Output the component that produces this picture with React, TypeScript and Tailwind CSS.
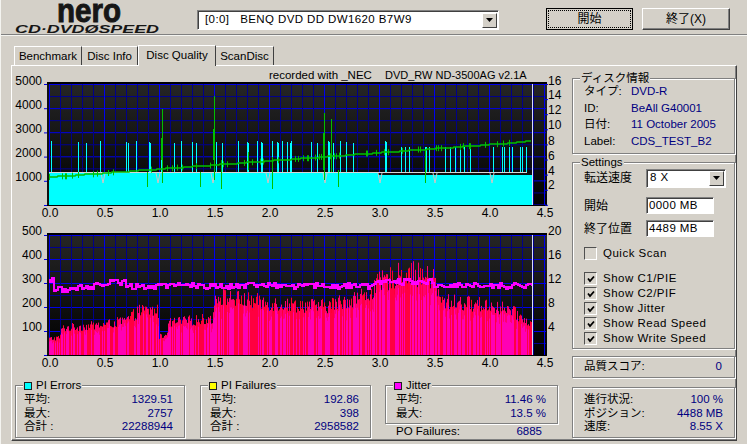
import React from "react";

// seeded random so the chart noise is the same on every load
let seed = 1234;
const rnd = () => {
  seed = (seed * 1664525 + 1013904223) % 4294967296;
  return seed / 4294967296;
};

const X0 = 49;
const XEND = 532;
const xs: number[] = [];
for (let x = X0; x < XEND; x++) xs.push(x);

const lerpTable = (table: number[][], v: number) => {
  for (let i = 1; i < table.length; i++) {
    if (v <= table[i][0]) {
      const [a, b] = table[i - 1];
      const [c, d] = table[i];
      return b + ((d - b) * (v - a)) / (c - a || 1);
    }
  }
  return table[table.length - 1][1];
};

const cyanSpikes = [
  51, 78, 86, 100, 126, 128, 136, 149, 150, 161, 162, 174, 181, 192, 196, 214, 216, 222, 238, 247, 248, 257, 261, 262,
  272, 277, 278, 282, 287, 290, 291, 311, 317, 328, 329, 333, 340, 346, 353, 385, 386, 401, 405, 409, 425, 426, 429,
  445, 450, 455, 460, 464, 470, 493, 502, 504, 509, 512, 520, 522, 526,
];
const dips = [103, 158, 213, 268, 325, 380, 435, 492];
const greenSpikes = [
  [162, 109, 183],
  [161, 138, 160],
  [214, 96, 180],
  [213, 129, 160],
  [147, 172, 187],
  [200, 172, 187],
  [221, 160, 189],
  [248, 152, 170],
  [272, 157, 189],
  [324, 113, 180],
  [323, 133, 170],
  [331, 119, 172],
  [338, 170, 187],
  [425, 150, 183],
];

const speedY = (x: number) => 177 - Math.floor((x - X0) / 9) * 0.67;

const envelope = [
  [0, 75],
  [0.09, 80],
  [0.12, 125],
  [0.5, 140],
  [0.7, 160],
  [0.82, 205],
  [0.99, 205],
  [1.0, 85],
  [1.05, 90],
  [1.1, 150],
  [1.49, 170],
  [1.51, 275],
  [1.7, 260],
  [2.0, 240],
  [2.5, 225],
  [2.9, 280],
  [3.0, 335],
  [3.25, 385],
  [3.5, 350],
  [3.55, 250],
  [4.0, 230],
  [4.2, 205],
  [4.37, 145],
];

const y2 = (v: number) => 355 - v * 0.24;
const bars = xs.map((x) => {
  const base = lerpTable(envelope, (x - X0) / 110);
  const r1 = rnd();
  const r2 = rnd();
  const top = base * (0.76 + r1 * 0.28);
  const mag = top * (0.72 + r2 * 0.28);
  return { x, top: y2(top), mag: y2(mag), strong: r2 > 0.55 };
});

// jitter trace: 2px columns joined to the previous value, pure magenta
let lastJitter = 279;
const jitter = xs
  .filter((_, i) => i % 2 === 0)
  .map((x) => {
    const drift =
      x < 52 ? 279 : x < 104 ? 290 - (x - 52) * 0.12 : x < 125 ? 281 : x < 375 ? 285 : x < 430 ? 281 : 285;
    const y = Math.round(drift + (rnd() - 0.5) * 6);
    const seg = { x, y: Math.min(y, lastJitter), h: Math.abs(y - lastJitter) + 2 };
    lastJitter = y;
    return seg;
  });

const smallTicks = xs.filter(() => rnd() > 0.88);

function Grid({ top, bottom, step, major }: { top: number; bottom: number; step: number; major: number }) {
  const rows: number[] = [];
  for (let i = 0; top + i * step <= bottom; i++) rows.push(i);
  const cols: number[] = [];
  for (let i = 0; i <= 45; i++) cols.push(i);
  return (
    <g>
      {rows.map((i) => (
        <line
          key={i}
          x1={47}
          x2={546}
          y1={top + i * step}
          y2={top + i * step}
          stroke={i % major === 0 ? "#0000e8" : "#000090"}
          strokeWidth={1}
        />
      ))}
      {cols.map((i) => (
        <line
          key={i}
          x1={49.5 + i * 11}
          x2={49.5 + i * 11}
          y1={top}
          y2={bottom}
          stroke={i % 5 === 0 ? "#0000f0" : "#000088"}
          strokeWidth={1}
        />
      ))}
    </g>
  );
}

const bottomLabels = ["0.0", "0.5", "1.0", "1.5", "2.0", "2.5", "3.0", "3.5", "4.0", "4.5"];

function AxisText({ x, y, anchor, children }: { x: number; y: number; anchor?: "start" | "middle" | "end"; children: React.ReactNode }) {
  return (
    <text x={x} y={y} textAnchor={anchor} fontSize={12} fill="#000" fontFamily="'Liberation Sans', sans-serif">
      {children}
    </text>
  );
}

function TopChart() {
  return (
    <svg viewBox="12 68 555 154" className="block w-[555px] h-[154px] shrink-0">
      <text x={269} y={79} fontSize={11.5} fill="#000" fontFamily="'Liberation Sans', sans-serif">
        recorded with _NEC
      </text>
      <text x={385} y={79} fontSize={11} fill="#000" fontFamily="'Liberation Sans', sans-serif">
        DVD_RW ND-3500AG v2.1A
      </text>
      <rect x={47} y={82} width={500} height={124} fill="url(#plotA)" />
      <rect x={47} y={82} width={500} height={2} fill="#000" />
      <Grid top={84.5} bottom={205} step={12.05} major={2} />
      <rect x={47} y={84} width={2} height={121} fill="#111" />
      {cyanSpikes.map((x, i) => (
        <rect key={i} x={x} y={x > 400 ? 147 : 141 + (i % 3)} width={1} height={32} fill="#00ffff" />
      ))}
      <rect x={49} y={173} width={483} height={32} fill="#00ffff" />
      <rect x={378} y={173} width={154} height={2} fill="#101010" />
      <rect x={49} y={172} width={478} height={1} fill="#d8d8d8" />
      {dips.map((x, i) => (
        <path key={i} d={`M${x - 2} 173L${x} 183L${x + 2} 173`} stroke="#c8c8c8" strokeWidth={1} fill="none" />
      ))}
      <path
        d={xs
          .map((x, i) => `${i === 0 ? "M" : "L"}${x} ${speedY(x).toFixed(0)}`)
          .join("")}
        stroke="#00c000"
        strokeWidth={1.6}
        fill="none"
      />
      {smallTicks.map((x) => (
        <rect key={x} x={x} y={speedY(x) - 3} width={1} height={6} fill="#00c000" />
      ))}
      {greenSpikes.map(([x, a, b], i) => (
        <rect key={i} x={x} y={a} width={1} height={b - a} fill="#00c000" />
      ))}
      <rect x={532} y={84} width={1} height={121} fill="#d8dcf8" />
      <rect x={47} y={205} width={500} height={1} fill="#000" />
      {[0, 1, 2, 3, 4, 5].map((i) => (
        <rect key={i} x={44} y={84 + i * 24.2} width={3} height={1} fill="#0000e8" />
      ))}
      {[0, 1, 2, 3, 4, 5, 6, 7, 8].map((i) => (
        <rect key={i} x={545} y={84 + i * 15.1} width={3} height={1} fill="#0000e8" />
      ))}
      {[
        ["5000", 85],
        ["4000", 109],
        ["3000", 133],
        ["2000", 157],
        ["1000", 181],
      ].map(([t, y]) => (
        <AxisText key={t} x={42} y={Number(y)} anchor="end">
          {t}
        </AxisText>
      ))}
      {[
        ["16", 85],
        ["14", 99],
        ["12", 114],
        ["10", 129],
        ["8", 145],
        ["6", 160],
        ["4", 175],
        ["2", 189],
      ].map(([t, y]) => (
        <AxisText key={t} x={548} y={Number(y)}>
          {t}
        </AxisText>
      ))}
      {bottomLabels.map((t, i) => (
        <AxisText key={t} x={50 + i * 55} y={217} anchor="middle">
          {t}
        </AxisText>
      ))}
    </svg>
  );
}

function BottomChart() {
  return (
    <svg viewBox="12 222 555 150" className="block w-[555px] h-[150px] shrink-0">
      <rect x={47} y={233} width={500} height={123} fill="url(#plotB)" />
      <rect x={47} y={233} width={500} height={2} fill="#000" />
      <Grid top={235.5} bottom={355} step={12} major={2} />
      <rect x={47} y={235} width={2} height={120} fill="#111" />
      {bars.map((b) => (
        <g key={b.x}>
          <rect x={b.x} y={b.top} width={1} height={355 - b.top} fill={b.strong ? "#ff0030" : "#ff0070"} />
          <rect x={b.x} y={b.mag} width={1} height={355 - b.mag} fill={b.strong ? "#ff0040" : "#ff00b4"} />
        </g>
      ))}
      {jitter.map((j) => (
        <rect key={j.x} x={j.x} y={j.y} width={2} height={j.h} fill="#ff00ff" />
      ))}
      <rect x={532} y={235} width={1} height={120} fill="#d8dcf8" />
      <rect x={47} y={355} width={500} height={1} fill="#000" />
      {[0, 1, 2, 3, 4, 5].map((i) => (
        <rect key={i} x={44} y={235 + i * 24} width={3} height={1} fill="#0000e8" />
      ))}
      {[
        ["500", 235],
        ["400", 259],
        ["300", 283],
        ["200", 307],
        ["100", 331],
      ].map(([t, y]) => (
        <AxisText key={t} x={42} y={Number(y)} anchor="end">
          {t}
        </AxisText>
      ))}
      {[
        ["20", 235],
        ["16", 259],
        ["12", 283],
        ["8", 307],
        ["4", 331],
      ].map(([t, y]) => (
        <AxisText key={t} x={548} y={Number(y)}>
          {t}
        </AxisText>
      ))}
      {bottomLabels.map((t, i) => (
        <AxisText key={t} x={50 + i * 55} y={367} anchor="middle">
          {t}
        </AxisText>
      ))}
    </svg>
  );
}

function Group({ title, swatch, className, children }: { title?: string; swatch?: string; className: string; children: React.ReactNode }) {
  return (
    <div className={`relative border border-[#808080] shadow-[1px_1px_0_#fff,inset_1px_1px_0_#fff] ${className}`}>
      {title && (
        <div className="absolute left-[7px] -top-[7px] flex items-center gap-[4px] bg-[#d4d0c8] px-[1px] h-[13px] leading-[13px]">
          {swatch && <span className={`w-[8px] h-[8px] border border-[#202020] ${swatch}`} />}
          <span>{title}</span>
        </div>
      )}
      {children}
    </div>
  );
}

function StatRow({ label, value }: { label: string; value: string }) {
  return (
    <div className="flex justify-between h-[13.5px] leading-[13.5px]">
      <span>{label}</span>
      <span className="text-[#000080]">{value}</span>
    </div>
  );
}

function Check({ label, checked }: { label: string; checked?: boolean }) {
  return (
    <div className="flex items-center gap-[6px] h-[15px] pl-[11px]">
      <span className="w-[13px] h-[13px] bg-[#d8d4cc] border border-t-[#505050] border-l-[#505050] border-b-white border-r-white flex items-center justify-center">
        {checked && (
          <svg viewBox="0 0 10 10" className="w-[10px] h-[10px]">
            <path d="M2 4.5L4 7L8 2.5" stroke="#000" strokeWidth={1.8} fill="none" />
          </svg>
        )}
      </span>
      <span className="tracking-[0.5px]">{label}</span>
    </div>
  );
}

const sunken =
  "border border-t-[#808080] border-l-[#808080] border-b-white border-r-white shadow-[inset_1px_1px_0_#404040] bg-white";

function ArrowButton() {
  return (
    <span className="w-[15px] h-[15px] bg-[#d4d0c8] border border-t-white border-l-white border-b-[#404040] border-r-[#404040] flex items-center justify-center">
      <svg viewBox="0 0 7 4" className="w-[7px] h-[4px]">
        <path d="M0 0H7L3.5 4Z" fill="#000" />
      </svg>
    </span>
  );
}

function Logo() {
  return (
    <svg viewBox="0 0 195 35" className="block w-[195px] h-[35px]">
      <text
        x={56}
        y={22}
        fontSize={34}
        fontWeight={700}
        fill="#161616"
        stroke="#161616"
        strokeWidth={1}
        textLength={64}
        lengthAdjust="spacingAndGlyphs"
        fontFamily="'Liberation Sans', sans-serif"
      >
        nero
      </text>
      <text
        x={14}
        y={33}
        fontSize={10}
        fontWeight={700}
        fontStyle="italic"
        fill="#161616"
        textLength={144}
        lengthAdjust="spacingAndGlyphs"
        fontFamily="'Liberation Sans', sans-serif"
      >
        CD·DVDØSPEED
      </text>
    </svg>
  );
}

export default function App() {
  return (
    <div className="w-[747px] h-[444px] overflow-hidden bg-[#d4d0c8] text-black text-[11.5px] font-['Liberation_Sans','Noto_Sans_CJK_JP',sans-serif] border-l border-l-[#f4f4f0]">
      <svg width="0" height="0" className="block">
        <defs>
          <linearGradient id="plotA" x1="0" y1="0" x2="0" y2="1">
            <stop offset="0" stopColor="#262626" />
            <stop offset="1" stopColor="#000" />
          </linearGradient>
          <linearGradient id="plotB" x1="0" y1="0" x2="0" y2="1">
            <stop offset="0" stopColor="#262626" />
            <stop offset="1" stopColor="#000" />
          </linearGradient>
        </defs>
      </svg>

      {/* header */}
      <div className="h-[36px] flex border-b border-b-[#f4f4f0]">
        <div className="w-[196px] border-b border-b-[#808080] h-[35px]">
          <Logo />
        </div>
        <div className="flex-1 flex pt-[8px] h-[35px] border-b border-b-[#808080]">
          <div className={`w-[302px] h-[20px] mt-[2px] flex items-center justify-between pr-[1px] pl-[7px] ${sunken}`}>
            <span className="tracking-[0.4px] whitespace-pre">[0:0]   BENQ DVD DD DW1620 B7W9</span>
            <ArrowButton />
          </div>
          <div className="ml-[47px] w-[87px] h-[22px] border border-black flex items-center justify-center">
            <div className="w-[81px] h-[16px] outline-1 outline-dotted outline-black flex items-center justify-center text-[12px]">
              開始
            </div>
          </div>
          <div className="ml-[9px] w-[88px] h-[22px] border border-t-white border-l-white border-b-[#404040] border-r-[#404040] shadow-[inset_-1px_-1px_0_#808080] flex items-center justify-center text-[12px]">
            終了(X)
          </div>
        </div>
      </div>

      {/* tabs */}
      <div className="h-[29px] pl-[13px] pt-[10px] flex items-end">
        <div className="w-[68px] h-[19px] leading-[19px] text-center bg-[#d4d0c8] border-t border-l border-t-white border-l-white border-r border-r-[#404040]">Benchmark</div>
        <div className="w-[56px] h-[19px] leading-[19px] text-center border-t border-t-white border-r border-r-[#404040]">Disc Info</div>
        <div className="w-[78px] h-[21px] leading-[19px] text-center border-t border-l border-t-white border-l-white border-r border-r-[#404040] relative top-[1px] bg-[#d4d0c8] z-10">Disc Quality</div>
        <div className="w-[58px] h-[19px] leading-[19px] text-center border-t border-t-white border-r border-r-[#404040]">ScanDisc</div>
      </div>

      {/* tab page */}
      <div className="ml-[10px] w-[726px] h-[376px] border border-t-white border-l-white border-r-[#404040] border-b-[#404040] shadow-[inset_-1px_-1px_0_#808080] flex">
        <div className="w-[560px] pt-[2px]">
          <TopChart />
          <BottomChart />
          <div className="flex mt-[13px] pl-[3px]">
            <Group title="PI Errors" swatch="bg-[#00ffff]" className="w-[170px] h-[53px] pl-[8px] pr-[11px] pt-[7px]">
              <StatRow label="平均:" value="1329.51" />
              <StatRow label="最大:" value="2757" />
              <StatRow label="合計 :" value="22288944" />
            </Group>
            <Group title="PI Failures" swatch="bg-[#ffff00]" className="w-[171px] h-[53px] ml-[15px] pl-[9px] pr-[11px] pt-[7px]">
              <StatRow label="平均:" value="192.86" />
              <StatRow label="最大:" value="398" />
              <StatRow label="合計 :" value="2958582" />
            </Group>
            <div className="ml-[14px] w-[173px]">
              <Group title="Jitter" swatch="bg-[#ff00ff]" className="h-[39px] pl-[10px] pr-[11px] pt-[7px]">
                <StatRow label="平均:" value="11.46 %" />
                <StatRow label="最大:" value="13.5 %" />
              </Group>
              <div className="pl-[11px] pr-[16px] mt-[1px]">
                <StatRow label="PO Failures:" value="6885" />
              </div>
            </div>
          </div>
        </div>

        <div className="w-[163px] pt-[12px] flex flex-col">
          <Group title="ディスク情報" className="h-[76px] pl-[11px] pt-[4px] grid grid-cols-[47px_1fr] auto-rows-[16.5px] leading-[16.5px]">
            <span>タイプ:</span>
            <span className="text-[#000080]">DVD-R</span>
            <span>ID:</span>
            <span className="text-[#000080]">BeAll G40001</span>
            <span>日付:</span>
            <span className="text-[#000080]">11 October 2005</span>
            <span>Label:</span>
            <span className="text-[#000080]">CDS_TEST_B2</span>
          </Group>
          <Group title="Settings" className="h-[187px] mt-[8px] pt-[5px]">
            <div className="flex items-center h-[20px] pl-[11px] text-[12px]">
              <span className="w-[62px]">転送速度</span>
              <div className={`w-[80px] h-[19px] flex items-center justify-between pl-[3px] pr-[1px] ${sunken}`}>
                <span className="text-[11.5px] tracking-[0.4px]">8 X</span>
                <ArrowButton />
              </div>
            </div>
            <div className="flex items-center h-[17px] mt-[9px] pl-[11px] text-[12px]">
              <span className="w-[62px]">開始</span>
              <div className={`w-[68px] h-[17px] pl-[2px] leading-[15px] text-[11.5px] tracking-[0.4px] ${sunken}`}>0000 MB</div>
            </div>
            <div className="flex items-center h-[17px] mt-[6px] pl-[11px] text-[12px]">
              <span className="w-[62px]">終了位置</span>
              <div className={`w-[68px] h-[17px] pl-[2px] leading-[15px] text-[11.5px] tracking-[0.4px] ${sunken}`}>4489 MB</div>
            </div>
            <div className="mt-[9px]">
              <Check label="Quick Scan" />
            </div>
            <div className="mt-[10px]">
              <Check label="Show C1/PIE" checked />
              <Check label="Show C2/PIF" checked />
              <Check label="Show Jitter" checked />
              <Check label="Show Read Speed" checked />
              <Check label="Show Write Speed" checked />
            </div>
          </Group>
          <Group className="h-[22px] mt-[7px] pl-[11px] pr-[12px] flex items-center justify-between">
            <span>品質スコア:</span>
            <span className="text-[#000080]">0</span>
          </Group>
          <Group className="h-[51px] mt-[9px] pl-[11px] pr-[11px] pt-[5px]">
            <StatRow label="進行状況:" value="100 %" />
            <StatRow label="ポジション:" value="4488 MB" />
            <StatRow label="速度:" value="8.55 X" />
          </Group>
        </div>
      </div>
    </div>
  );
}
